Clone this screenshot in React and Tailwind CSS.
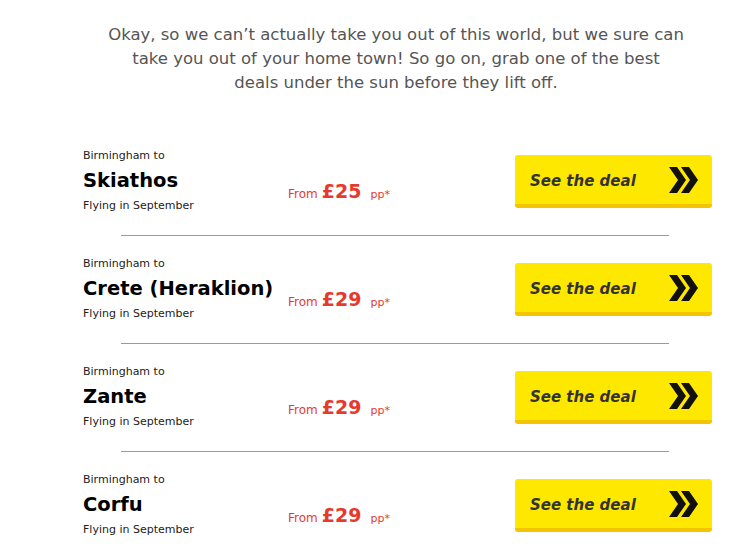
import React from "react";

const deals = [
  { to: "Skiathos", price: 25 },
  { to: "Crete (Heraklion)", price: 29 },
  { to: "Zante", price: 29 },
  { to: "Corfu", price: 29 },
];

const Chevrons = () => (
  <svg width="30" height="26" viewBox="0 0 30 26" className="shrink-0">
    <polygon points="0,0 8,0 17,13 8,26 0,26 9,13" fill="#111" />
    <polygon points="12,0 20,0 29,13 20,26 12,26 21,13" fill="#111" />
  </svg>
);

const DealRow = ({ deal, last }) => (
  <div>
    <div className="flex items-start">
      <div className="w-[205px] shrink-0">
        <div className="text-[11px] leading-[16px] text-[#222]">Birmingham to</div>
        <div className="text-[19.5px] leading-[34px] font-bold text-black whitespace-nowrap">{deal.to}</div>
        <div className="text-[11px] leading-[16px] text-[#222]">Flying in September</div>
      </div>
      <div className="mt-[29px] flex items-baseline leading-[28px] text-[#e63a2e] whitespace-nowrap">
        <span className="text-[12px]">From</span>
        <span className="ml-[4px] text-[19px] font-bold">£{deal.price}</span>
        <span className="ml-[9px] text-[11px]">pp*</span>
      </div>
      <a
        href="#"
        className="ml-auto mt-[7px] flex h-[53px] w-[197px] items-center justify-between rounded-[3px] border-b-4 border-[#f5c400] bg-[#ffe800] pl-[15px] pr-[13px]"
      >
        <span className="mt-[3px] text-[15px] font-bold italic text-[#333]">See the deal</span>
        <Chevrons />
      </a>
    </div>
    {!last && <div className="ml-[38px] mt-[21px] mb-[20px] w-[548px] border-t border-[#9a9a9a]" />}
  </div>
);

export default function App() {
  return (
    <div className="w-[734px] h-[547px] overflow-hidden bg-white" style={{ fontFamily: '"DejaVu Sans", Verdana, sans-serif' }}>
      <div className="pt-[23px] text-center text-[16.5px] leading-[24px] text-[#555] pl-[58px]">
        <p>Okay, so we can’t actually take you out of this world, but we sure can</p>
        <p>take you out of your home town! So go on, grab one of the best</p>
        <p>deals under the sun before they lift off.</p>
      </div>
      <div className="mt-[53px] ml-[83px] w-[629px]">
        {deals.map((d, i) => (
          <DealRow key={d.to} deal={d} last={i === deals.length - 1} />
        ))}
      </div>
    </div>
  );
}
